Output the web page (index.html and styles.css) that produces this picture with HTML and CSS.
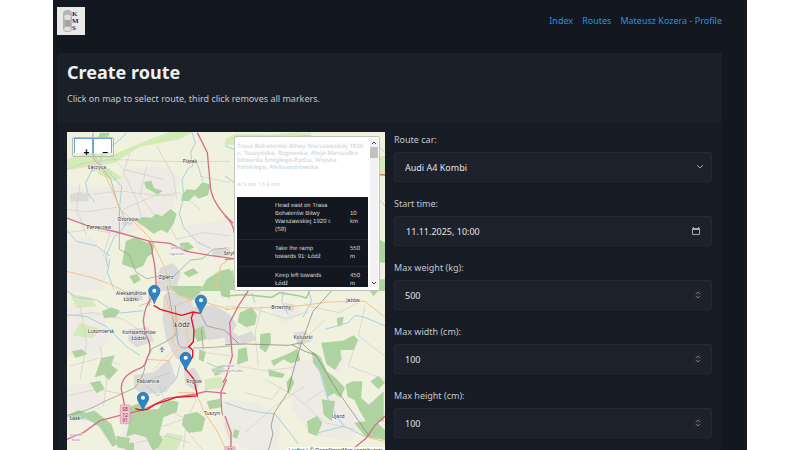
FILE: index.html
```html
<!DOCTYPE html>
<html lang="en">
<head>
<meta charset="utf-8">
<title>Create route</title>
<meta name="viewport" content="width=device-width, initial-scale=1">
<link rel="stylesheet" href="styles.css">
</head>
<body>
<div class="page">
  <header class="topbar">
    <a href="#" class="logo" aria-label="KMS">
      <svg viewBox="0 0 28 28" width="28" height="28">
        <rect width="28" height="28" fill="#e9e9e6"/>
        <rect x="6" y="3" width="9" height="22" rx="4" fill="#b4b4b4"/>
        <path d="M7 9q3.500-3 7 0l-1 4H8z" fill="#dfe0e0"/>
        <rect x="8" y="13" width="5" height="6" fill="#a5a5a5"/>
        <path d="M8 20h5l1 3q-3.500 2-7 0z" fill="#e2e2e2"/>
        <g class="logo-text"><text x="15" y="9">K</text><text x="15" y="16">M</text><text x="15" y="23">S</text></g>
      </svg>
    </a>
    <nav class="nav">
      <a href="#">Index</a>
      <a href="#">Routes</a>
      <a href="#">Mateusz Kozera - Profile</a>
    </nav>
  </header>

  <main class="card">
    <div class="card-head">
      <h1>Create route</h1>
      <p>Click on map to select route, third click removes all markers.</p>
    </div>
    <div class="card-body">
      <section class="map" aria-label="Map">
        <svg class="map-canvas" viewBox="67 131 318 321" preserveAspectRatio="xMidYMin slice">
          <defs>
            <g id="pin">
              <path d="M0 38C-4 22-17 12-17 0A17 17 0 0 1 17 0C17 12 4 22 0 38z" fill="#2e83c5" stroke="#2568a0" stroke-width="2"/>
              <circle r="6" cy="-1" fill="#fff"/>
            </g>
          </defs>
          <rect x="67" y="131" width="318" height="321" fill="#f0f1de"/>

          <!-- north-west -->
          <g transform="translate(60 125) scale(.33333)">
            <g fill="#eeebe4">
              <path d="M20 170l60 20 70-10 30 60 80 20-10 50-90 20-60-20-80-30z"/>
              <path d="M190 130l110-10 60 30-20 90-60 60-70-30-50-70z"/>
              <path d="M20 350l70-20 60 70-20 90-110 10zM380 300l120-20 40 30-30 80-90-10z"/>
            </g>
            <g fill="#d3ebb4">
              <path d="M20 100l70-20 60 10 120-50 60-22h70l-40 22-120 22-80 50-40 5-100 15z"/>
              <path d="M115 120l30 5 40 30-20 10-50-20z"/>
            </g>
            <g fill="#dcdad8">
              <path d="M30 205l30-8 30 8-8 20-50 2zM300 425l40-14 22 30-16 54h-60zM180 270l30 5 10 20-30 6zM455 372l55-10v28l-50 4zM85 115l25-2 10 18-22 8z"/>
            </g>
            <g fill="#afd3a0">
              <path d="M252 168l22-4 8 22 26 8-14 12-36-20z"/>
              <path d="M366 208l14-18 26 2 22-24 24 8-8 32-28 10-12-10-18 18-22-2z"/>
              <path d="M226 285l22-12 26 2 14-12 18 8 26-22 18 14-8 28-20 30-18-10-24 12-28-22z"/>
              <path d="M198 345l30-12 30 16 26 4-6 30-16 10-12 26-24 10-40-14 6-36z"/>
              <path d="M360 352l24-4 18 16-24 14-20-8zM208 450l24-6 10 18-20 12zM440 460l40-26 30-6v67h-90zM370 440l30-14 16 14-30 14z"/>
              <path d="M120 20h30l-6 12-30 6z"/>
            </g>
            <g fill="none" stroke="#c9c1bf" stroke-width="1.500">
              <path d="M20 130q80-35 190-28t300 4M100 205l80-10 100 12 60 2M20 250l60 8 90-14M210 80l-20 60 40 80 20 80M290 60l50 90 10 70M20 320l70-10 60 10-20 70M190 250l90-40 80-10 60 50M130 60l60 70 120 30M420 150l90 20M320 280l30 60 80-20 80 10M60 170l-10 80 30 80M260 120l-20 90 60 80"/>
            </g>
            <g fill="none" stroke="#a9cfdf" stroke-width="3">
              <path d="M200 20l-30 30-40 22-10 40 30 30 35 40-6 60 20 50-14 20-22 20-26 60 6 30M97 130l-20 40 6 30 22 30"/>
              <path d="M396 20l10 30-14 30 6 40-14 8-18 34 6 50-14 50 12 40 22 26 20 20 40 20M20 312l30 34 60 14 40 30M150 400l-8 40 20 50M380 100l32 14 16 50"/>
            </g>
            <path d="M98 20v60q0 25 24 40l30 40 26 90v120l30 16 20 52 32 20 50-10 30 4 52-50 36-4 30-28 42-4" fill="none" stroke="#9a9a96" stroke-width="2"/>
            <g fill="none" stroke="#f3c48c" stroke-width="3">
              <path d="M100 20v60l26 50 30 60 24 60 30 26 60 60 22 42 24 50 18 60M20 436l80 20 60 22 30 17M510 398l-28 20-16 77"/>
            </g>
            <g fill="none" stroke="#d4708a" stroke-width="4">
              <path d="M20 276l60 22 90 20 100 28 60 6 50 24 70 12 70 10M412 20l30 60 10 110q10 50 68 102M265 345q12 10 12 40 10 30 12 110"/>
            </g>
          </g>

          <!-- north-east -->
          <g transform="translate(225 125) scale(.33333)">
            <path d="M0 40l30-16 110 2 60-6h60l-20 18-240 20zM462 90h18v60h-18z" fill="#d3ebb4"/>
            <path d="M0 270q24 20 28 50M0 400l30-2M460 145l20 2" fill="none" stroke="#d4708a" stroke-width="4"/>
            <path d="M0 60l28 10M0 150l28 20M462 60l18 20M462 220l18 20M0 440l30 20" stroke="#a9cfdf" stroke-width="3"/>
            <path d="M0 440l24-8 6 60H0zM462 340l18 10v60h-18zM462 460h18v35h-18z" fill="#afd3a0"/>
          </g>

          <!-- south-west -->
          <g transform="translate(60 285) scale(.33333)">
            <g fill="#eeebe4">
              <path d="M20 60l60-10 50 40 20 70-50 60-80-10zM20 300l80-10 40 60-50 40-70-10zM200 380l60 20 40 100H180z"/>
            </g>
            <g fill="#dcdad8">
              <path d="M310 30l40-26 40 30 12 30 60-8 48 30 20 30-20 36-60 10-50-6-12 70-40-8-30-60-10-60zM205 130l60-6 16 40-50 20-26-20zM222 268l60-10 46-40 20 60-30 40-70 8-26-20zM372 256l30-12 24 40-20 30-30-20zM190 16l50-4 10 30-50 6z"/>
            </g>
            <g fill="#afd3a0">
              <path d="M326 0h100l-4 18-26 26-40-16zM478 0h32v36l-26-6z"/>
              <path d="M126 76l28-12 26 10-14 20-34 2zM36 196l30-6 16 14-36 12zM124 216l40-8-10 30 20 14-28 30-14-16-28 8zM90 290l30-6 14 24-24 14zM398 134l34-16 6 40-26 10z"/>
              <path d="M208 362l30-10 12 18 44 0 22-30 40 8-6 30-40 16-12 50 20 30-40 20-20-40-34-10-26 8 8-36z"/>
              <path d="M372 386l40-8 24 18-10 40-40 4-20-24zM440 346l40-8 4 26-36 6zM170 450l40 6-8 34-30-6zM24 388l30-16 24 8 26-6 50 40 20 60-16 8-40-60-40-26-36 8z"/>
              <path d="M418 190l20 8-8 30-14-8zM454 250l30-12 16 18-34 14zM196 470h26v25h-26z"/>
            </g>
            <g fill="#d6e9bd">
              <path d="M30 24l60 10 20 26-60 6zM60 110l60 20-20 26-60-6zM434 280l50-8 10 30-60 12zM320 440l50 10-20 45h-60z"/>
            </g>
            <g fill="none" stroke="#c9c1bf" stroke-width="1.500">
              <path d="M20 90l80-10 90 20 60 40M30 240l90-24 60 20M20 330l90-20 80 14M300 300l20 70 60 30-10 90M60 60l20 110-20 110M120 180l20 110-10 70M410 340l-40 80 60 75M440 200l70 10M200 400l110 20 60-20M230 470l90-20 70 20M340 190l-60 60"/>
            </g>
            <g fill="none" stroke="#a9cfdf" stroke-width="3">
              <path d="M20 14l30 20 60 8 60 40 80-8M20 86l60 6 60 30 60 60 40 26M260 300l34 30 26-30M360 236l-10 40-16 20M20 392l60 8 60 20 30 50M440 230l70 30M330 260l-70 24"/>
            </g>
            <path d="M20 388q60-10 110-40l90-40q34-30 36-80l20-40 40-20 30-20M268 60v-50M346 148l-10-70-14-78M346 60l6 100q4 26 20 26 20 0 26-20M400 186l60-2 50-4M410 60l30 60 60 14M424 130l6 60" fill="none" stroke="#8e8e8b" stroke-width="2"/>
            <g fill="none" stroke="#f3c48c" stroke-width="3">
              <path d="M336 0l-20 30 16 50 20 20-16 70 20 14-30 40-66-4M342 24l60 16 108 30M354 320l50 0M410 325l24 55 40 60 26 55M340 60l60-20M360 100l-40-20M396 80l-20 30 10 60M236 60l40-14"/>
            </g>
            <g fill="none" stroke="#d4708a" stroke-width="4">
              <path d="M20 460l50-20 50-36 60-16 68-16 70-34 90-14 30-8 60 6M276 34q-22 26-26 70 4 40 16 60 10 30-4 50-4 30-30 36-50 20-48 60l10 50M500 280l-18 40 4 60 24 50"/>
            </g>
            <path d="M281 58l20 12 64 18 34-10 22 4M400 80l-6 16 8 36-2 36-14 14 12 10 0 20-24 34 28 34 10 50-64 4-60 20-26 16-22 2-14-4" fill="none" stroke="#e51225" stroke-width="4"/>
            <rect x="181" y="357" width="29" height="56" rx="3" fill="#efc5d0" stroke="#d98ca0" stroke-width="2"/>
            <path d="M306 182v16M299 191l7-4 7 4M303 197h6" stroke="#8471b0" stroke-width="3" fill="none"/>
          </g>

          <!-- south-east -->
          <g transform="translate(225 285) scale(.33333)">
            <g fill="#eeebe4">
              <path d="M200 230l70-14 20 60 50 60 80 70-40 60-120-20-60-80zM-10 340l100 10 80 40-10 100-70 10-90-40zM320 210l30-24 10 30-20 50-20-20zM126 60l80-6 30 30-60 30z"/>
            </g>
            <g fill="#dcdad8"><path d="M0 120l40 30 40-14 14 26-40 14-54-4zM204 140l40-4 16 30-40 14zM180 50l30 6-6 20-30-2z"/></g>
            <g fill="#afd3a0">
              <path d="M44 80l36-16 16 22-6 30-26 8-26-16zM106 144l30-4 2 30-16 30-18-14zM40 190l24-6 6 40-34 12zM138 224l50-20 30-16 8 36-30 8-20-12-30 20zM130 250l50 14-8 12-40-6z"/>
              <path d="M288 170l66-6 32-16 14 14-14 30-40 0 4 26-20 34-26-18zM262 196l24 16 20 44 26 20 28 30-14 30-18-14-20 10-20-70-24-32z"/>
              <path d="M362 296l20-10 30 0-4 50 24 20 44-40v90l-50 6-18-30-20-40-20-10zM184 290l14-20 10 20-18 36zM246 406l30-16 16 20-16 40-26-10z"/>
              <path d="M336 96l20-4-4 24-14 6zM436 286l24-16 20 20-20 20zM28 430l16 4-8 24-14-6zM388 410l60-8 32 30v30l-60-10zM290 340l40 6-10 60-24-20zM430 10l30 4-14 16z"/>
            </g>
            <g fill="none" stroke="#c9c1bf" stroke-width="1.500">
              <path d="M0 60l90 8 90 30 70-20M40 240l80 14 90-10M120 280l90 50 90 80 90 20M60 320l80 20 30-40M250 60l90 20 60-30M300 100l-60 60M390 180l-20 60 110 40M60 440l90-80 90-60M240 350l60-40M110 60l-20 80 10 100M420 60l-20 90 80 60"/>
            </g>
            <g fill="none" stroke="#a9cfdf" stroke-width="3">
              <path d="M176 16l-6 30 20 40M250 14l10 30-26 50M260 200l20 40 16 60 20 60 40 60 60 30M300 130l70-20 20-22 30 6 60 26M0 350l60 20 40 8 50 6 40 50 30 40M80 20l10 30M280 440l80-20"/>
            </g>
            <path d="M0 30l60-4 80 8 24-14 60 10 20 6 10-22" fill="none" stroke="#a6cf9b" stroke-width="5"/>
            <path d="M0 72q40-10 90-6l130-6 90-12 110-2 60 48M0 410l20 60M430 455l50 12" fill="none" stroke="#f3c48c" stroke-width="3"/>
            <path d="M320 14l-56 62-24 66-10 26-18 60-24 92-40 60-10 40 6 24-14 50M0 134l40 38M0 176l60-2 130 4 40-8 20 20 24 20 60 100 100 142M200 176l40 20 34 12" fill="none" stroke="#7b7b77" stroke-width="2"/>
            <path d="M70 14l-30 46-26 50 6 80 2 20-18 60-10 20M380 492l44-36 26-38 30-28M0 390l18 50v44" fill="none" stroke="#d4708a" stroke-width="4"/>
            <rect x="0" y="482" width="30" height="20" rx="3" fill="#efc5d0" stroke="#d98ca0" stroke-width="2"/>
          </g>

          <g class="places">
            <text x="97" y="168">Łęczyca</text><text x="190" y="162">Piątek</text>
            <text x="128" y="220">Ozorków</text><text x="99" y="228">Parzęczew</text>
            <text x="166" y="278">Zgierz</text><text x="233" y="254">Stryków</text>
            <text x="131" y="294">Aleksandrów</text><text x="131" y="300">Łódzki</text>
            <text x="101" y="332">Lutomiersk</text><text x="139" y="333">Konstantynów</text><text x="139" y="339">Łódzki</text>
            <text x="148" y="382">Pabianice</text><text x="194" y="382">Rzgów</text>
            <text x="212" y="414">Tuszyn</text><text x="75" y="419">Łask</text>
            <text x="281" y="308">Brzeziny</text><text x="353" y="301">Jeżów</text>
            <text x="303" y="338">Koluszki</text><text x="338" y="417">Ujazd</text>
            <text class="city" x="182" y="326">Łódź</text>
            <g class="district"><text x="177" y="248">powiat</text><text x="177" y="254">zgierski</text><text x="305" y="136">powiat</text><text x="76" y="435">powiat</text><text x="76" y="440">łaski</text><text x="228" y="366">powiat</text><text x="228" y="371">łódzki wschodni</text></g>
            <g class="shield"><text x="125" y="410">S8</text><text x="125" y="416">12</text><text x="125" y="421">91</text><text x="230" y="451">A1</text></g>
          </g>
          <g transform="translate(60 285) scale(.33333)">
            <use href="#pin" x="283" y="15"/><use href="#pin" x="423" y="44"/><use href="#pin" x="377" y="216"/><use href="#pin" x="249" y="336"/>
          </g>
        </svg>

        <div class="zoom">
          <button type="button" aria-label="Zoom in">+</button>
          <button type="button" aria-label="Zoom out">−</button>
        </div>

        <div class="directions">
          <div class="directions-text">
            <h2>Trasa Bohaterów Bitwy Warszawskiej 1920<br>r., Tuszyńska, Rzgowska, Aleja Marszałka<br>Edwarda Śmigłego-Rydza, Wojska<br>Polskiego, Aleksandrowska</h2>
            <h3>47.5 km, 1 h 6 min</h3>
            <table>
              <tr><td class="turn"></td><td>Head east on Trasa<br>Bohaterów Bitwy<br>Warszawskiej 1920 r.<br>(S8)</td><td class="dist">10<br>km</td></tr>
              <tr><td class="turn"></td><td>Take the ramp<br>towards 91: Łódź</td><td class="dist">550<br>m</td></tr>
              <tr><td class="turn"></td><td>Keep left towards<br>Łódź</td><td class="dist">450<br>m</td></tr>
            </table>
          </div>
          <div class="scrollbar">
            <svg viewBox="0 0 8 8" width="8" height="8"><path d="M2 5l2-2 2 2"/></svg>
            <span class="thumb"></span>
            <svg viewBox="0 0 8 8" width="8" height="8"><path d="M2 3l2 2 2-2"/></svg>
          </div>
        </div>
        <div class="credit"><a href="#">Leaflet</a> | © OpenStreetMap contributors</div>
      </section>

      <form class="form">
        <div class="field">
          <label for="car">Route car:</label>
          <div class="control">
            <select id="car"><option>Audi A4 Kombi</option></select>
            <svg class="mark" viewBox="0 0 8 8" width="8" height="8"><path d="M1 2l3 3 3-3" fill="none" stroke="#9a9fa9"/></svg>
          </div>
        </div>
        <div class="field">
          <label for="start">Start time:</label>
          <div class="control">
            <input class="date" id="start" type="text" value="11.11.2025, 10:00">
            <svg class="mark inset" viewBox="0 0 8 8" width="8" height="8"><path d="M.5 1.500h7v6h-7z" fill="none" stroke="#a5a9b0"/><path d="M0 1h8v2H0zM1 0h1v1H1zM6 0h1v1H6z" fill="#a5a9b0"/></svg>
          </div>
        </div>
        <div class="field">
          <label for="weight">Max weight (kg):</label>
          <div class="control">
            <input id="weight" type="number" value="500">
            <svg class="mark inset spin" viewBox="0 0 8 8" width="8" height="8"><path d="M2 3l2-2 2 2M2 5l2 2 2-2"/></svg>
          </div>
        </div>
        <div class="field">
          <label for="width">Max width (cm):</label>
          <div class="control">
            <input id="width" type="number" value="100">
            <svg class="mark inset spin" viewBox="0 0 8 8" width="8" height="8"><path d="M2 3l2-2 2 2M2 5l2 2 2-2"/></svg>
          </div>
        </div>
        <div class="field">
          <label for="height">Max height (cm):</label>
          <div class="control">
            <input id="height" type="number" value="100">
            <svg class="mark inset spin" viewBox="0 0 8 8" width="8" height="8"><path d="M2 3l2-2 2 2M2 5l2 2 2-2"/></svg>
          </div>
        </div>
      </form>
    </div>
  </main>
</div>
</body>
</html>
```
FILE: styles.css
```css
* { box-sizing: border-box; }
body {
  margin: 0;
  background: #fff;
  font-family: "Noto Sans", "Open Sans", sans-serif;
  font-size: 9px;
  color: #c2c7d0;
}
.page {
  height: 100vh;
  overflow: hidden;
  margin: 0 53px;
  padding: 0 25px 0 4px;
  background: #13171f;
}
.topbar {
  display: flex;
  justify-content: space-between;
  align-items: center;
  height: 41px;
  margin-bottom: 12px;
}
.logo { display: block; height: 28px; }
.logo-text { font: bold 7px "Liberation Serif", serif; fill: #1b1b80; }
.nav { display: flex; gap: 9px; }
.nav a { color: #1f95e2; text-decoration: none; }

.card { background: #181c25; border-radius: 2px; }
.card-head {
  height: 69px;
  padding: 7px 10px;
  background: #1b1f28;
  border-radius: 2px 2px 0 0;
}
h1 {
  margin: 0 0 7px;
  font-size: 18px;
  line-height: 24px;
  color: #f0f1f3;
}
.card-head p { margin: 0; line-height: 16px; }
.card-body {
  display: grid;
  grid-template-columns: 1fr 1fr;
  gap: 9px;
  padding: 10px;
}

.map { position: relative; height: 321px; overflow: hidden; }
.map-canvas { display: block; width: 100%; height: 100%; }
.places text {
  font: 5px "Noto Sans", sans-serif;
  text-anchor: middle;
  fill: #333;
  stroke: #fff;
  stroke-width: 1px;
  stroke-opacity: .6;
  paint-order: stroke;
}
.places .city { font-size: 7px; }
.places .district text { fill: #a77bb0; font-size: 4px; }
.places .shield text { fill: #8c2c48; stroke: none; }

.zoom {
  position: absolute;
  top: 5px;
  left: 5px;
  display: flex;
  height: 20px;
  padding: 0 1px;
  border: 1px solid #b5bcae;
  border-radius: 2px;
}
.zoom button {
  width: 19px;
  height: 15px;
  padding: 7px 0 0 6px;
  border: 1px solid #66a9d4;
  border-bottom: 0;
  background: #fff;
  color: #000;
  font: bold 10px/14px "Liberation Sans", sans-serif;
}

.directions {
  position: absolute;
  top: 4px;
  right: 5px;
  display: flex;
  width: 146px;
  height: 155px;
  padding: 2px 1px 3px 2px;
  border: 1px solid #bfc3b8;
  border-radius: 2px;
  background: #fff;
  text-rendering: geometricPrecision;
}
.directions-text { flex: 1; overflow: hidden; }
.directions h2 {
  margin: 4px 0 10px;
  font-size: 6px;
  line-height: 7px;
  color: #dadde1;
  white-space: nowrap;
}
.directions h3 {
  margin: 0 0 8px;
  font: 5px/8px "Noto Sans", sans-serif;
  color: #c5c9cf;
}
.directions table {
  width: 132px;
  border-collapse: collapse;
  background: #13171f;
  color: #d5d8dd;
  font: 6px/8px "Liberation Sans", sans-serif;
}
.directions td { padding: 5px 0; border-bottom: 1px solid #202632; white-space: nowrap; }
.directions .turn { width: 38px; }
.directions .dist { width: 19px; }
.scrollbar {
  display: flex;
  flex-direction: column;
  width: 8px;
  margin-left: 2px;
  background: #f1f1f1;
}
.scrollbar path { fill: none; stroke: #444; }
.scrollbar .thumb { height: 11px; margin-bottom: auto; background: #c1c1c1; }

.credit {
  position: absolute;
  right: 0;
  bottom: 0;
  padding: 0 2px;
  background: rgba(255, 255, 255, .8);
  color: #333;
  font: 5px/6px "Noto Sans", sans-serif;
}
.credit a { color: #0078a8; }

.form { display: grid; gap: 14px; align-content: start; }
.field { display: grid; gap: 4px; }
.field label { line-height: 16px; }
.control { position: relative; }
.control input,
.control select {
  display: block;
  width: 100%;
  height: 30px;
  padding: 0 10px;
  border: 1px solid #232935;
  border-radius: 2px;
  background: #1c212c;
  color: #e0e3e7;
  font: inherit;
  appearance: none;
}
.control .date { padding-left: 11px; }
.control input[type="number"] { appearance: textfield; }
.mark { position: absolute; right: 8px; top: 11px; pointer-events: none; }
.mark.inset { right: 12px; }
.mark.spin { right: 10px; background: #26242d; }
.spin path { fill: none; stroke: #77757c; }
```
